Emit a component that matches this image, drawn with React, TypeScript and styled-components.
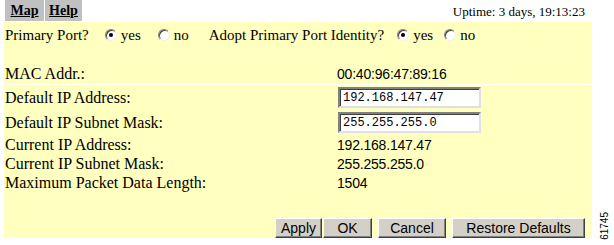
import styled, { createGlobalStyle } from "styled-components";

const GlobalStyle = createGlobalStyle`
  html, body {
    margin: 0;
    padding: 0;
    background: #ffffff;
  }
  body {
    font-family: "Liberation Serif", "Times New Roman", serif;
    color: #000000;
  }
`;

const Page = styled.div`
  position: relative;
  width: 614px;
  height: 245px;
  overflow: hidden;
  background: #ffffff;
`;

const TopBar = styled.div`
  display: flex;
  align-items: center;
  justify-content: space-between;
  height: 22px;
  padding: 0 29px 0 5px;
`;

const Tabs = styled.div`
  display: flex;
  gap: 1px;
  height: 21px;
  align-self: flex-start;
`;

const Tab = styled.a`
  display: flex;
  align-items: center;
  justify-content: center;
  width: ${(p: { w: number }) => p.w}px;
  background: #c0c0c0;
  color: #000000;
  font-weight: bold;
  font-size: 14px;
  text-decoration: underline;
`;

const Uptime = styled.div`
  font-size: 13px;
  padding-top: 2px;
`;

const Panel = styled.div`
  margin-left: 4px;
  width: 588px;
  height: 216px;
  background: #ffffc0;
  display: flex;
  flex-direction: column;
`;

const RadioRow = styled.div`
  display: flex;
  align-items: center;
  height: 26px;
  padding-left: 1px;
  font-size: 15px;
`;

const Question = styled.span`
  margin-right: ${(p: { gap: number }) => p.gap}px;
`;

const Option = styled.label`
  display: flex;
  align-items: center;
  gap: 4px;
  margin-right: ${(p: { gap: number }) => p.gap}px;
`;

const Radio = styled.span<{ checked?: boolean }>`
  position: relative;
  width: 12px;
  height: 12px;
  box-sizing: border-box;
  border-radius: 50%;
  background: #ffffff;
  border: 1px solid;
  border-color: #808080 #f0f0f0 #f0f0f0 #808080;
  box-shadow: inset 1px 1px 0 #404040;
  &::after {
    content: "";
    display: ${(p) => (p.checked ? "block" : "none")};
    position: absolute;
    left: 3px;
    top: 3px;
    width: 4px;
    height: 4px;
    border-radius: 50%;
    background: #000000;
  }
`;

const Spacer = styled.div`
  height: ${(p: { h: number }) => p.h}px;
`;

const Row = styled.div<{ h: number; line?: boolean }>`
  display: grid;
  grid-template-columns: 333px 1fr;
  align-items: center;
  height: ${(p) => p.h}px;
  border-bottom: ${(p) => (p.line ? "1px solid #fffff0" : "none")};
`;

const Label = styled.span`
  padding-left: 1px;
  font-size: 16px;
`;

const Value = styled.span`
  font-family: "Liberation Sans", Arial, sans-serif;
  font-size: 14px;
  letter-spacing: -0.2px;
`;

const TextInput = styled.input`
  width: 143px;
  height: 21px;
  box-sizing: border-box;
  margin: 0 0 0 1px;
  padding: 0 3px;
  background: #ffffff;
  border: 2px solid;
  border-color: #808080 #e0e0e0 #e0e0e0 #808080;
  box-shadow: inset 1px 1px 0 #404040;
  font-family: "Liberation Mono", "Courier New", monospace;
  font-size: 12px;
  color: #000000;
  outline: none;
`;

const Buttons = styled.div`
  display: flex;
  justify-content: flex-end;
  margin-top: auto;
  padding-right: 7px;
`;

const Button = styled.button<{ w: number; gap?: number }>`
  width: ${(p) => p.w}px;
  height: 20px;
  margin-left: ${(p) => p.gap ?? 0}px;
  padding: 0;
  background: #d4d0c8;
  border: 1px solid;
  border-color: #ffffff #404040 #404040 #ffffff;
  box-shadow: inset -1px -1px 0 #808080;
  font-family: "Liberation Sans", Arial, sans-serif;
  font-size: 14px;
  color: #000000;
`;

const FigureId = styled.span`
  position: absolute;
  right: 4px;
  bottom: 5px;
  writing-mode: vertical-rl;
  transform: rotate(180deg);
  font-family: "Liberation Sans", Arial, sans-serif;
  font-size: 10px;
  line-height: 10px;
  color: #000000;
`;

const App = () => {
  return (
    <Page>
      <GlobalStyle />
      <TopBar>
        <Tabs>
          <Tab w={39}>Map</Tab>
          <Tab w={37}>Help</Tab>
        </Tabs>
        <Uptime>Uptime: 3 days, 19:13:23</Uptime>
      </TopBar>
      <Panel>
        <RadioRow>
          <Question gap={16}>Primary Port?</Question>
          <Option gap={17}>
            <Radio checked />
            yes
          </Option>
          <Option gap={20}>
            <Radio />
            no
          </Option>
          <Question gap={13}>Adopt Primary Port Identity?</Question>
          <Option gap={11}>
            <Radio checked />
            yes
          </Option>
          <Option gap={0}>
            <Radio />
            no
          </Option>
        </RadioRow>
        <Spacer h={16} />
        <Row h={20} line>
          <Label>MAC Addr.:</Label>
          <Value>00:40:96:47:89:16</Value>
        </Row>
        <Row h={25}>
          <Label>Default IP Address:</Label>
          <TextInput defaultValue="192.168.147.47" />
        </Row>
        <Row h={25}>
          <Label>Default IP Subnet Mask:</Label>
          <TextInput defaultValue="255.255.255.0" />
        </Row>
        <Row h={19}>
          <Label>Current IP Address:</Label>
          <Value>192.168.147.47</Value>
        </Row>
        <Row h={19}>
          <Label>Current IP Subnet Mask:</Label>
          <Value>255.255.255.0</Value>
        </Row>
        <Row h={19}>
          <Label>Maximum Packet Data Length:</Label>
          <Value>1504</Value>
        </Row>
        <Buttons>
          <Button w={47}>Apply</Button>
          <Button w={49} gap={1}>OK</Button>
          <Button w={68} gap={6}>Cancel</Button>
          <Button w={133} gap={6}>Restore Defaults</Button>
        </Buttons>
      </Panel>
      <FigureId>61745</FigureId>
    </Page>
  );
};

export default App;
